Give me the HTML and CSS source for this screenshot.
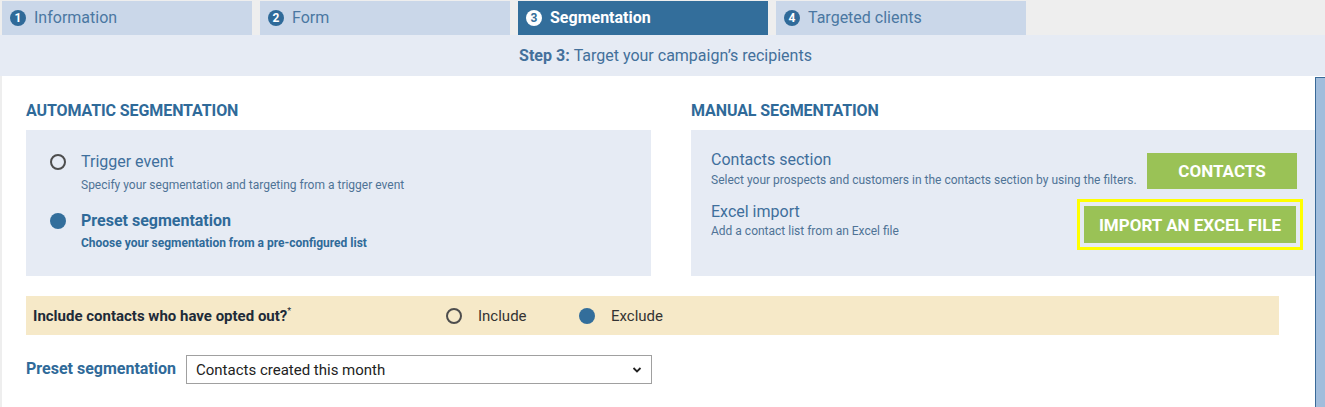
FILE: index.html
```html
<!DOCTYPE html>
<html lang="en">
<head>
<meta charset="utf-8">
<title>Segmentation</title>
<link rel="stylesheet" href="styles.css">
</head>
<body>
<nav class="tabs">
  <div class="tab"><span class="num">1</span><span>Information</span></div>
  <div class="tab"><span class="num">2</span><span>Form</span></div>
  <div class="tab active"><span class="num">3</span><span>Segmentation</span></div>
  <div class="tab"><span class="num">4</span><span>Targeted clients</span></div>
</nav>
<div class="stepbar"><b>Step 3:</b> Target your campaign’s recipients</div>
<div class="main">
  <div class="content">
    <div class="cols">
      <section class="col">
        <h2 class="heading">AUTOMATIC SEGMENTATION</h2>
        <div class="box auto">
          <div class="option">
            <span class="radio"></span>
            <div class="opt-text">
              <div class="opt-title">Trigger event</div>
              <div class="opt-sub">Specify your segmentation and targeting from a trigger event</div>
            </div>
          </div>
          <div class="option selected">
            <span class="radio on"></span>
            <div class="opt-text">
              <div class="opt-title">Preset segmentation</div>
              <div class="opt-sub">Choose your segmentation from a pre-configured list</div>
            </div>
          </div>
        </div>
      </section>
      <section class="col">
        <h2 class="heading">MANUAL SEGMENTATION</h2>
        <div class="box manual">
          <div class="mrow first">
            <div class="m-text">
              <div class="m-title">Contacts section</div>
              <div class="m-sub">Select your prospects and customers in the contacts section by using the filters.</div>
            </div>
            <button class="btn btn-contacts">CONTACTS</button>
          </div>
          <div class="mrow second">
            <div class="m-text">
              <div class="m-title">Excel import</div>
              <div class="m-sub tight">Add a contact list from an Excel file</div>
            </div>
            <button class="btn btn-import">IMPORT AN EXCEL FILE</button>
          </div>
        </div>
      </section>
    </div>
    <div class="optout">
      <div class="question">Include contacts who have opted out?<sup>*</sup></div>
      <label class="choice include"><span class="radio small"></span><span>Include</span></label>
      <label class="choice"><span class="radio small on"></span><span>Exclude</span></label>
    </div>
    <div class="preset">
      <label class="preset-label" for="preset">Preset segmentation</label>
      <select id="preset" class="select">
        <option>Contacts created this month</option>
      </select>
    </div>
  </div>
  <div class="sidebar"></div>
</div>
</body>
</html>
```
FILE: styles.css
```css
* { box-sizing: border-box; }
html, body { margin: 0; padding: 0; }
body {
  font-family: Roboto, "Liberation Sans", Arial, sans-serif;
  background: #ffffff;
  width: 1325px;
  height: 407px;
  overflow: hidden;
}

/* Tabs */
.tabs {
  display: flex;
  gap: 8px;
  background: #eeeeee;
  padding: 1px 0 0 2px;
  height: 35px;
}
.tab {
  width: 250px;
  height: 34px;
  background: #cad7e9;
  color: #4a77a2;
  display: flex;
  align-items: center;
  gap: 8px;
  padding-left: 8px;
  padding-bottom: 1px;
  font-size: 16px;
}
.tab .num {
  width: 16px;
  height: 16px;
  border-radius: 50%;
  background: #2f6a99;
  color: #ffffff;
  font-size: 12px;
  font-weight: 700;
  display: flex;
  align-items: center;
  justify-content: center;
  line-height: 1;
}
.tab.active {
  background: #336e9b;
  color: #ffffff;
  font-weight: 700;
}
.tab.active .num {
  background: #ffffff;
  color: #336e9b;
}

/* Step bar */
.stepbar {
  height: 41px;
  background: #e6ebf4;
  color: #43709b;
  font-size: 16px;
  display: flex;
  align-items: center;
  justify-content: center;
  padding-left: 6px;
}
.stepbar b { font-weight: 700; margin-right: 4px; }

/* Main */
.main {
  display: flex;
  border-left: 2px solid #eeeeee;
  height: 331px;
}
.content {
  flex: 1;
  padding: 25px 0 0 24px;
}
.sidebar {
  width: 10px;
  margin-top: 1px;
  background: #a1bddc;
  border-left: 1px solid #3a6a98;
  border-top: 1px solid #3a6a98;
}

.cols {
  display: grid;
  grid-template-columns: 625px 1fr;
  column-gap: 40px;
}
.heading {
  margin: 0 0 9px 0;
  font-size: 16px;
  line-height: 20px;
  font-weight: 700;
  color: #2f6a99;
  letter-spacing: -0.1px;
}
.box {
  background: #e6ebf4;
  height: 146px;
}

/* Automatic */
.auto { padding: 22px 0 0 24px; }
.option {
  display: flex;
  align-items: flex-start;
  gap: 15px;
}
.option + .option { margin-top: 18px; }
.radio {
  width: 16px;
  height: 16px;
  border-radius: 50%;
  border: 2px solid #4d4d4d;
  flex: none;
  margin-top: 2px;
}
.radio.on {
  border: none;
  background: #336e9b;
}
.opt-title {
  font-size: 16px;
  line-height: 20px;
  color: #3f6f9c;
}
.opt-sub {
  font-size: 12px;
  line-height: 16px;
  margin-top: 5px;
  color: #4f7396;
}
.selected .opt-title { font-weight: 700; color: #2f6a99; }
.selected .opt-sub { font-weight: 700; color: #2f6a99; margin-top: 4px; }

/* Manual */
.manual { padding: 20px 18px 0 20px; }
.mrow {
  display: flex;
  justify-content: space-between;
  align-items: flex-start;
}
.mrow.second { margin-top: 13px; }
.m-title {
  font-size: 16px;
  line-height: 20px;
  color: #3f6f9c;
}
.m-sub {
  font-size: 12px;
  line-height: 16px;
  margin-top: 2px;
  color: #4f7396;
}
.m-sub.tight { margin-top: 1px; }
.btn {
  background: #9ac256;
  color: #ffffff;
  border: none;
  font-family: inherit;
  font-weight: 700;
  font-size: 17px;
  padding: 0;
  cursor: pointer;
}
.btn-contacts {
  width: 150px;
  height: 36px;
  margin-top: 3px;
}
.btn-import {
  width: 212px;
  height: 37px;
  margin-top: 4px;
  margin-right: 1px;
  outline: 3px solid #ffff00;
  outline-offset: 4px;
}

/* Opt-out */
.optout {
  margin: 20px 36px 0 0;
  height: 39px;
  background: #f6e9c8;
  display: flex;
  align-items: center;
  padding-left: 7px;
  font-size: 15px;
}
.question {
  width: 413px;
  font-weight: 700;
  color: #1e2b38;
}
.question sup {
  font-size: 9px;
  font-weight: 400;
  vertical-align: 7px;
  line-height: 0;
}
.choice {
  display: flex;
  align-items: center;
  gap: 16px;
  color: #333333;
}
.choice.include { width: 133px; }
.radio.small { margin-top: 0; width: 16px; height: 16px; }

/* Preset */
.preset {
  display: flex;
  align-items: center;
  margin-top: 20px;
}
.preset-label {
  width: 160px;
  font-size: 16px;
  font-weight: 700;
  color: #2f6a99;
  padding-bottom: 2px;
}
.select {
  width: 466px;
  height: 29px;
  border: 1px solid #a0a0a0;
  border-radius: 0;
  background: #ffffff url("data:image/svg+xml;utf8,<svg xmlns='http://www.w3.org/2000/svg' width='10' height='8' viewBox='0 0 10 8'><path d='M1.5 2 L5 5.5 L8.5 2' fill='none' stroke='%23222' stroke-width='1.8'/></svg>") no-repeat right 9px center;
  -webkit-appearance: none;
  appearance: none;
  font-family: inherit;
  font-size: 15px;
  color: #222222;
  padding: 0 24px 0 9px;
}
```
